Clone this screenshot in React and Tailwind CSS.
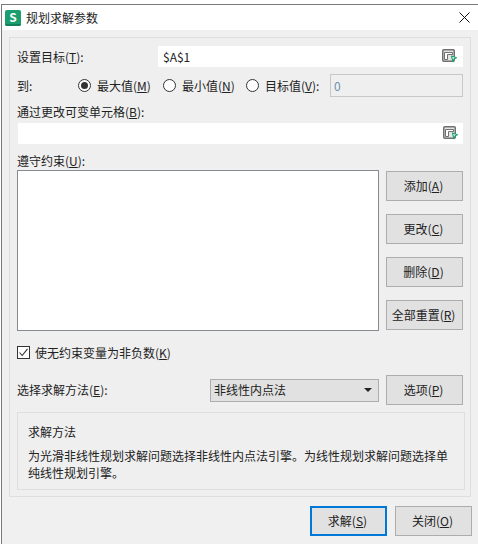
import React from "react";

const FONT = { fontFamily: '"Noto Sans CJK SC", "Noto Sans", sans-serif' };

function RefIcon() {
  return (
    <svg width="16" height="15" viewBox="0 0 16 15" fill="none">
      <rect x="0.75" y="0.75" width="11.5" height="11.5" rx="1" fill="#e4e4e4" stroke="#707070" strokeWidth="1.5" />
      <path d="M2.5 3.5H10.5V5.5H5.5V10.5H2.5Z" fill="#fff" stroke="#707070" strokeWidth="1" />
      <path d="M9.5 7L14.5 8.8L12 9.8L11 12.8Z" fill="#fff" stroke="#1aa06d" strokeWidth="1.1" strokeLinejoin="round" />
    </svg>
  );
}

function Logo() {
  return (
    <div className="w-4 h-4 rounded-[2px] bg-[#1a9e6e] flex items-center justify-center relative shrink-0">
      <span className="text-white text-[12px] leading-[16px] font-bold pb-px">S</span>
      <span className="absolute left-0 right-0 bottom-0 h-[2px] bg-[#14805a] rounded-b-[2px]" />
    </div>
  );
}

function Radio({ checked }) {
  return (
    <span className="w-[13px] h-[13px] rounded-full border border-[#333] bg-white flex items-center justify-center shrink-0">
      {checked && <span className="w-[7px] h-[7px] rounded-full bg-[#333]" />}
    </span>
  );
}

function Btn({ children, className = "" }) {
  return (
    <div className={`w-[77px] h-[30px] bg-[#e1e1e1] border border-[#adadad] flex items-center justify-center pr-[2px] text-[12px] text-[#222] ${className}`}>
      <span>{children}</span>
    </div>
  );
}

export default function App() {
  return (
    <div style={FONT} className="w-[478px] h-[544px] bg-white pt-1 pl-px overflow-hidden text-[12px] leading-[16px] text-[#222]">
      <div className="h-full border-t border-l border-[#7a7a7a] bg-[#f0f0f0] flex flex-col">
        <div className="h-[25px] bg-white flex items-center pl-[3px] shrink-0">
          <Logo />
          <span className="ml-[5px] text-[#222]">规划求解参数</span>
          <svg className="ml-auto mr-[8px]" width="11" height="11" viewBox="0 0 11 11" fill="none">
            <path d="M0.5 0.5L10.5 10.5M10.5 0.5L0.5 10.5" stroke="#111" strokeWidth="1" />
          </svg>
        </div>

        <div className="mt-[7px] ml-[7px] w-[462px] h-[460px] border border-[#dedede] bg-[#efefef] pl-[7px] pt-[8px] shrink-0">
          <div className="flex items-center h-[21px] w-[446px]">
            <span className="w-[141px]">设置目标(<u>T</u>):</span>
            <div className="flex-1 h-full bg-white flex items-center justify-between pl-[5px] pr-[5px]">
              <span>$A$1</span>
              <RefIcon />
            </div>
          </div>

          <div className="flex items-center h-[23px] mt-[7px] w-[446px]">
            <span className="w-[61px]">到:</span>
            <Radio checked />
            <span className="ml-[6px] w-[66px]">最大值(<u>M</u>)</span>
            <Radio />
            <span className="ml-[6px] w-[64px]">最小值(<u>N</u>)</span>
            <Radio />
            <span className="ml-[6px] w-[65px]">目标值(<u>V</u>):</span>
            <div className="flex-1 h-full border border-[#c8c8c8] bg-[#efefef] flex items-center pl-[3px] text-[#6d8fb0]">0</div>
          </div>

          <div className="mt-[6px] h-[17px] flex items-center">通过更改可变单元格(<u>B</u>):</div>

          <div className="mt-[3px] h-[21px] w-[445px] ml-px bg-white flex items-center justify-end pr-[4px]">
            <RefIcon />
          </div>

          <div className="mt-[8px] h-[17px] flex items-center">遵守约束(<u>U</u>):</div>

          <div className="mt-px flex w-[446px]">
            <div className="w-[362px] h-[161px] bg-white border border-[#868a91] shrink-0" />
            <div className="ml-[7px] pt-px flex flex-col gap-[13px]">
              <Btn>添加(<u>A</u>)</Btn>
              <Btn>更改(<u>C</u>)</Btn>
              <Btn>删除(<u>D</u>)</Btn>
              <Btn>全部重置(<u>R</u>)</Btn>
            </div>
          </div>

          <div className="mt-[15px] h-[13px] flex items-center">
            <span className="w-[13px] h-[13px] border border-[#333] bg-white flex items-center justify-center shrink-0">
              <svg width="11" height="11" viewBox="0 0 11 11" fill="none">
                <path d="M1.5 5.5L4.2 8.5L9.5 1.8" stroke="#333" strokeWidth="1.1" />
              </svg>
            </span>
            <span className="ml-[5px]">使无约束变量为非负数(<u>K</u>)</span>
          </div>

          <div className="mt-[16px] flex items-center h-[30px] w-[446px]">
            <span className="w-[193px]">选择求解方法(<u>E</u>):</span>
            <div className="w-[169px] h-[23px] bg-[#e1e1e1] border border-[#adadad] flex items-center justify-between pl-[3px] pr-[6px]">
              <span>非线性内点法</span>
              <svg width="8" height="4" viewBox="0 0 8 4"><path d="M0 0H8L4 4Z" fill="#222" /></svg>
            </div>
            <Btn className="ml-[7px]">选项(<u>P</u>)</Btn>
          </div>

          <div className="mt-[7px] w-[448px] h-[78px] border border-[#dedede] pl-[10px] pt-[11px]">
            <div className="h-[16px]">求解方法</div>
            <div className="mt-[7px] w-[426px] leading-[17px]">为光滑非线性规划求解问题选择非线性内点法引擎。为线性规划求解问题选择单纯线性规划引擎。</div>
          </div>
        </div>

        <div className="mt-[9px] flex justify-end pr-[6px] gap-[8px]">
          <div className="w-[77px] h-[30px] bg-[#e1e1e1] border-2 border-[#0078d7] flex items-center justify-center pr-[2px]"><span>求解(<u>S</u>)</span></div>
          <Btn>关闭(<u>O</u>)</Btn>
        </div>
      </div>
    </div>
  );
}
